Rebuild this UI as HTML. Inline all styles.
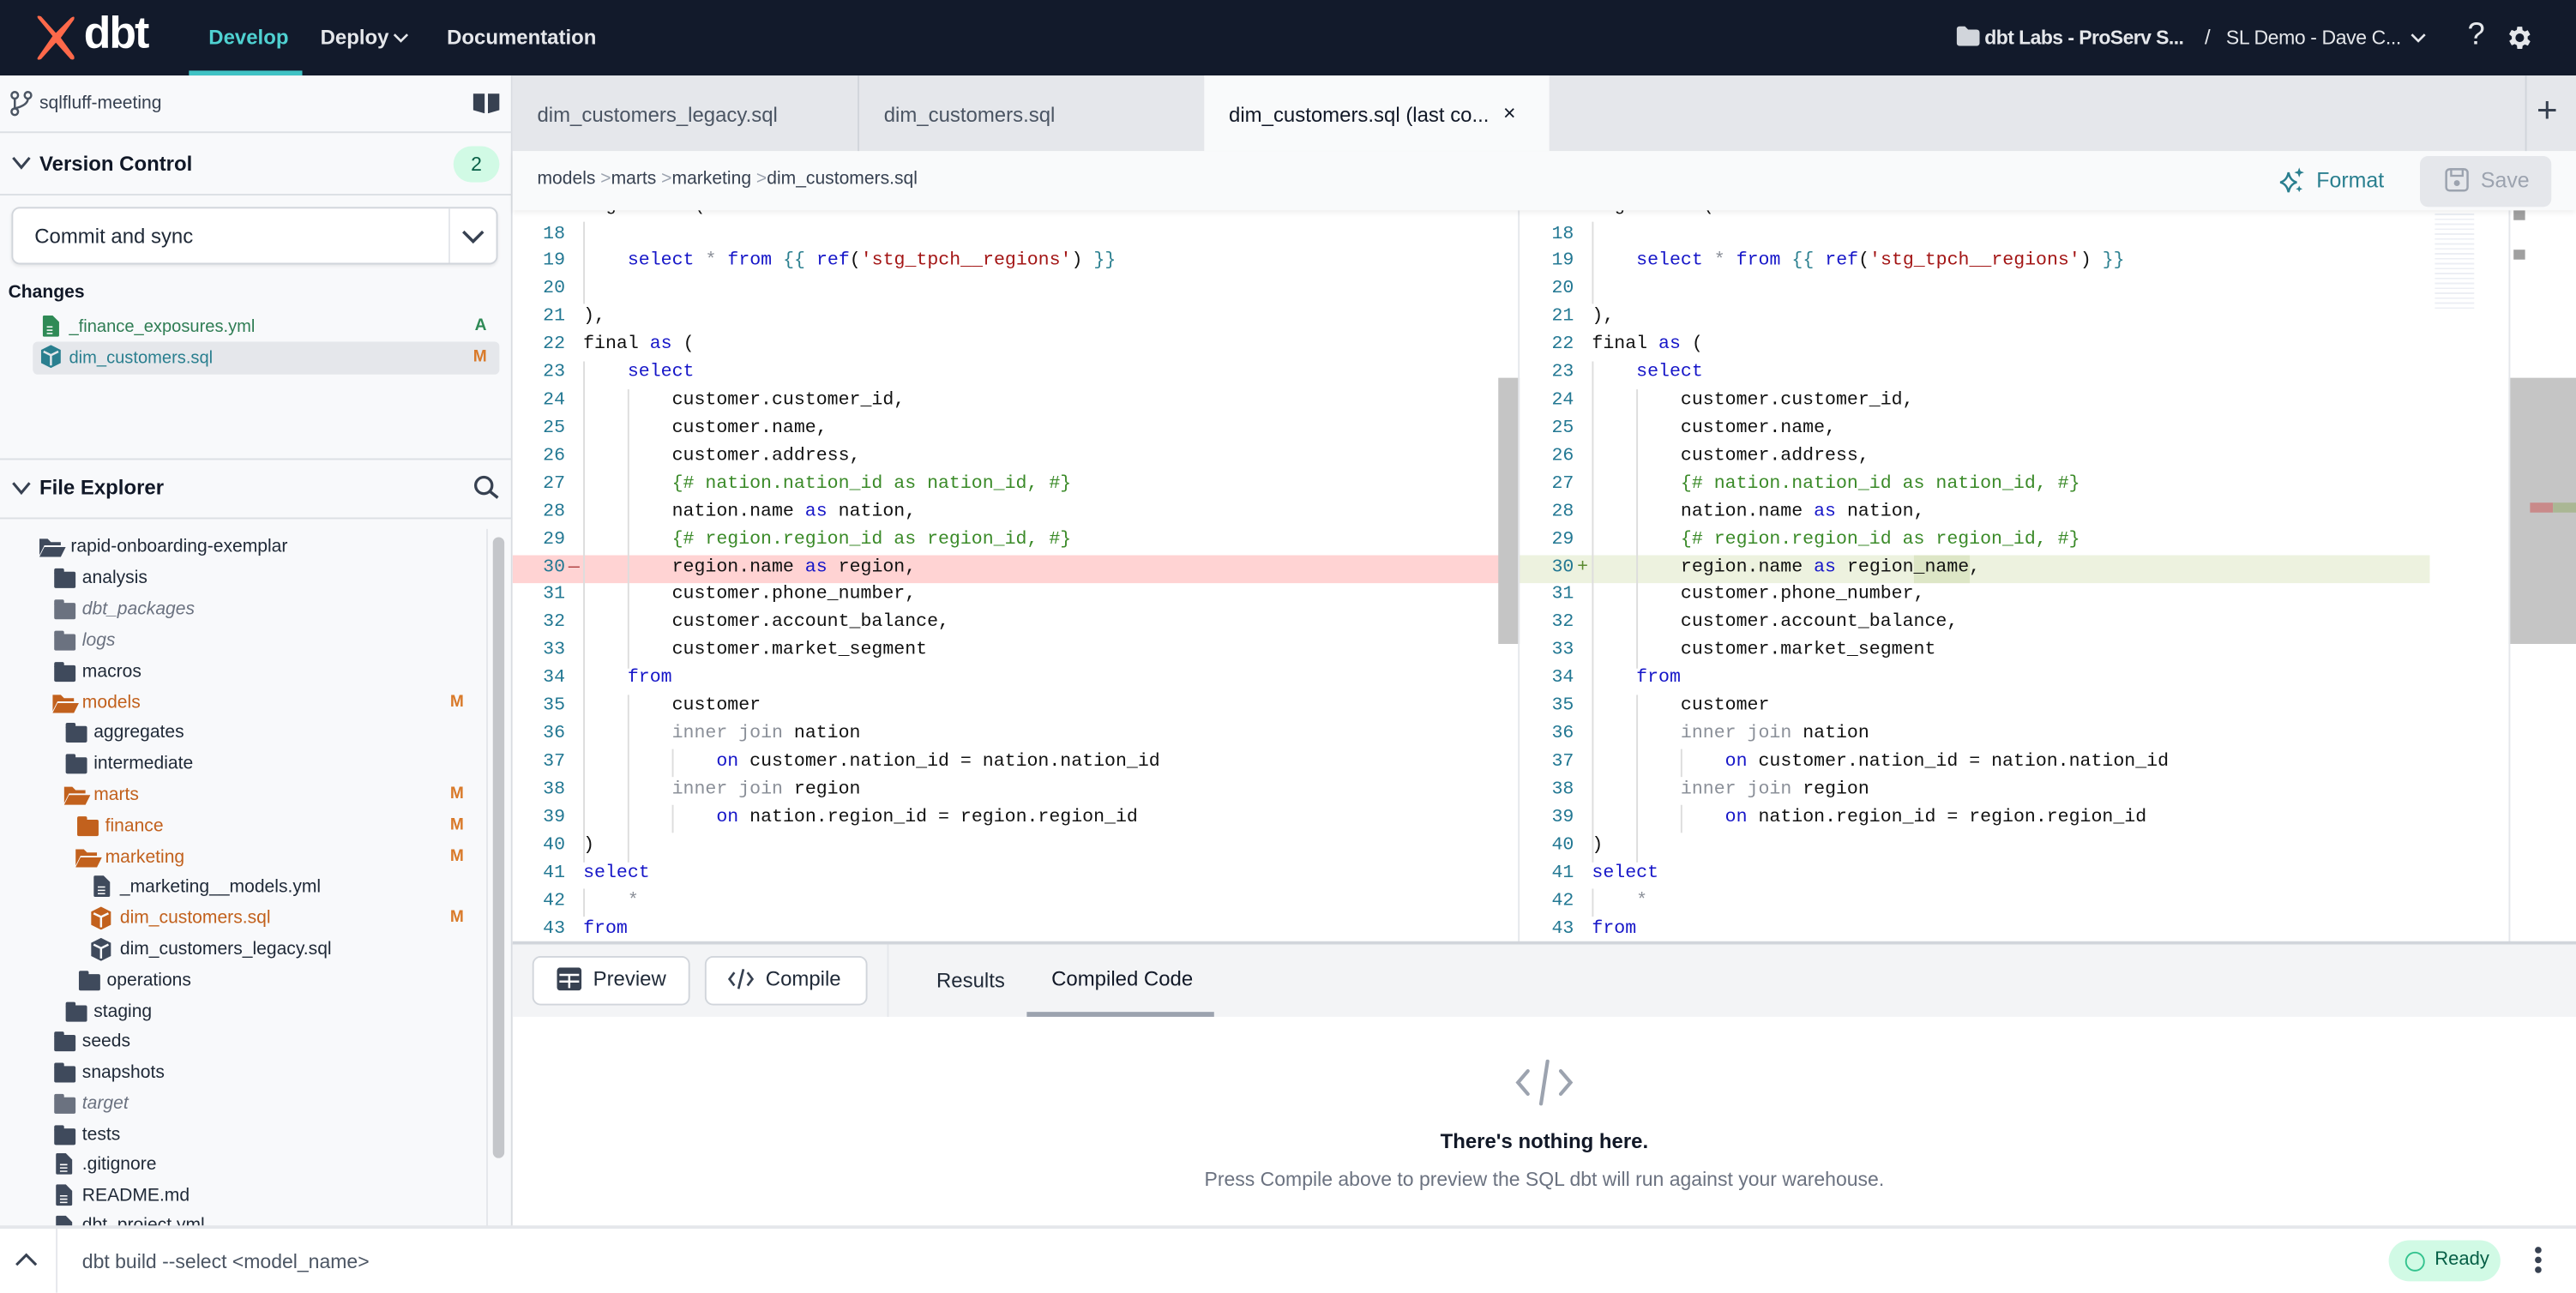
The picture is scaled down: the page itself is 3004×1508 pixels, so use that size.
<!DOCTYPE html>
<html><head><meta charset="utf-8">
<style>
*{box-sizing:border-box;margin:0;padding:0}
html,body{width:3004px;height:1508px;overflow:hidden;background:#fff}
#s{position:absolute;left:0;top:0;width:1568px;height:787px;transform:scale(1.91582);transform-origin:0 0;font-family:"Liberation Sans",sans-serif;color:#1f2937;overflow:hidden;background:#fff}
.a{position:absolute}
.t{position:absolute;white-space:nowrap}
.nav{left:0;top:0;width:1568px;height:46px;background:#121a2b}
.side{left:0;top:46px;width:312px;height:702px;background:#f8f9fb;border-right:1px solid #d9dce1}
.hr{position:absolute;left:0;width:312px;height:1px;background:#dcdfe4}
.tree .t{font-size:11px;color:#1f2937}
.fold{position:absolute;width:13px;height:10px;background:#3f4a5c;border-radius:1px}
.fold:before{content:"";position:absolute;left:0;top:-2px;width:6px;height:3px;background:inherit;border-radius:1px 1px 0 0}
.M{position:absolute;left:274px;font-size:10px;font-weight:bold;color:#d97a2a}
.code{font-family:"Liberation Mono",monospace;font-size:11.25px;color:#111}
.ln{position:absolute;width:32px;text-align:right;color:#237893}
.cl{position:absolute;white-space:pre}
.k{color:#1616c8}.j{color:#2a7f8f}.s{color:#a31515}.c{color:#3a8a28}.g{color:#8a8f98}
</style></head><body><div id="s">

<!-- NAV -->
<div class="a nav"></div>
<svg class="a" style="left:19px;top:9px" width="30" height="29" viewBox="0 0 30 29"><path d="M4 2 L13 13 L4 26 Q3 28 6 27 L15 17 L24 27 Q27 28 26 25 L18 14 L26 3 Q27 0 24 2 L15 11 L6 1 Q3 0 4 2Z" fill="#ff694a"/></svg>
<div class="t" style="left:51px;top:5px;font-size:27px;font-weight:bold;color:#fff;letter-spacing:-1px">dbt</div>
<div class="t" style="left:127px;top:16px;font-size:12.5px;font-weight:bold;color:#4fd1d1">Develop</div>
<div class="a" style="left:115px;top:43px;width:69px;height:3px;background:#3fc2c4"></div>
<div class="t" style="left:195px;top:16px;font-size:12.5px;font-weight:bold;color:#e5e7eb">Deploy</div>
<svg class="a" style="left:239px;top:19px" width="10" height="8"><path d="M1 2 L5 6 L9 2" stroke="#e5e7eb" stroke-width="1.4" fill="none"/></svg>
<div class="t" style="left:272px;top:16px;font-size:12.5px;font-weight:bold;color:#e5e7eb">Documentation</div>
<svg class="a" style="left:1191px;top:16px" width="14" height="12"><path d="M0 2 Q0 0 2 0 L5 0 L7 2 L12 2 Q14 2 14 4 L14 10 Q14 12 12 12 L2 12 Q0 12 0 10Z" fill="#d1d5db"/></svg>
<div class="t" style="left:1208px;top:16px;font-size:12px;font-weight:bold;color:#e5e7eb;letter-spacing:-0.3px">dbt Labs - ProServ S...</div>
<div class="t" style="left:1342px;top:16px;font-size:12.5px;color:#e5e7eb">/</div>
<div class="t" style="left:1355px;top:16px;font-size:12px;color:#e5e7eb;letter-spacing:-0.2px">SL Demo - Dave C...</div>
<svg class="a" style="left:1467px;top:19px" width="10" height="8"><path d="M1 2 L5 6 L9 2" stroke="#e5e7eb" stroke-width="1.4" fill="none"/></svg>
<div class="t" style="left:1502px;top:11px;font-size:19px;color:#e5e7eb">?</div>
<svg class="a" style="left:1524px;top:14px" width="18" height="18" viewBox="0 0 24 24"><path fill="#e5e7eb" d="M19.4 13a7.5 7.5 0 000-2l2.1-1.6-2-3.5-2.5 1a7.6 7.6 0 00-1.7-1L15 3h-4l-.4 2.6a7.6 7.6 0 00-1.7 1l-2.5-1-2 3.5L6.6 11a7.5 7.5 0 000 2l-2.1 1.6 2 3.5 2.5-1a7.6 7.6 0 001.7 1L11 21h4l.4-2.6a7.6 7.6 0 001.7-1l2.5 1 2-3.5zM13 15.5a3.5 3.5 0 110-7 3.5 3.5 0 010 7z"/></svg>

<!-- SIDEBAR -->
<div class="a side"></div>
<svg class="a" style="left:6px;top:55px" width="14" height="16" viewBox="0 0 14 16"><circle cx="3" cy="3" r="2" stroke="#4b5563" fill="none" stroke-width="1.3"/><circle cx="3" cy="13" r="2" stroke="#4b5563" fill="none" stroke-width="1.3"/><circle cx="11" cy="3" r="2" stroke="#4b5563" fill="none" stroke-width="1.3"/><path d="M3 5 V11 M11 5 Q11 9 3 11" stroke="#4b5563" fill="none" stroke-width="1.3"/></svg>
<div class="t" style="left:24px;top:57px;font-size:11px;color:#374151">sqlfluff-meeting</div>
<svg class="a" style="left:288px;top:56px" width="16" height="13"><path d="M0 1 L7 1 L7 13 L0 11Z M9 1 L16 1 L16 11 L9 13Z" fill="#374151"/></svg>
<div class="hr" style="top:80px"></div>
<svg class="a" style="left:7px;top:95px" width="12" height="9"><path d="M1 1 L6 7 L11 1" stroke="#374151" stroke-width="1.6" fill="none"/></svg>
<div class="t" style="left:24px;top:93px;font-size:12.5px;font-weight:bold;color:#111827">Version Control</div>
<div class="a" style="left:276px;top:89px;width:28px;height:22px;border-radius:11px;background:#d1fae5;color:#065f46;font-size:12px;text-align:center;line-height:22px">2</div>
<div class="hr" style="top:118px"></div>
<div class="a" style="left:7px;top:126px;width:296px;height:35px;background:#fff;border:1px solid #d1d5db;border-radius:5px;box-shadow:0 1px 2px rgba(0,0,0,.08)"></div>
<div class="a" style="left:273px;top:127px;width:1px;height:33px;background:#e5e7eb"></div>
<div class="t" style="left:21px;top:137px;font-size:12.5px;color:#1f2937">Commit and sync</div>
<svg class="a" style="left:281px;top:140px" width="14" height="9"><path d="M1 1 L7 7 L13 1" stroke="#374151" stroke-width="1.8" fill="none"/></svg>
<div class="t" style="left:5px;top:172px;font-size:11px;font-weight:bold;color:#111827">Changes</div>
<svg class="a" style="left:26px;top:192px" width="10" height="13"><path d="M0 1 Q0 0 1 0 L6 0 L10 4 L10 12 Q10 13 9 13 L1 13 Q0 13 0 12Z" fill="#2f8a56"/><path d="M2.5 7 H6 M2.5 9 H6 M2.5 11 H6" stroke="#fff" stroke-width=".8"/></svg>
<div class="t" style="left:42px;top:193px;font-size:10.5px;color:#2f7d54">_finance_exposures.yml</div>
<div class="t" style="left:289px;top:193px;font-size:10px;font-weight:bold;color:#2f8a56">A</div>
<div class="a" style="left:20px;top:208px;width:284px;height:20px;background:#e5e7eb;border-radius:3px"></div>
<svg class="a" style="left:25px;top:210px" width="12" height="14" viewBox="0 0 12 14"><path d="M6 0 L12 3 L12 11 L6 14 L0 11 L0 3Z" fill="#2a7f8f"/><path d="M1.5 4 L6 6.2 L10.5 4 M6 6.2 V12.5" stroke="#e5e7eb" stroke-width="1.3" fill="none"/></svg>
<div class="t" style="left:42px;top:212px;font-size:10.5px;color:#2a7f8f">dim_customers.sql</div>
<div class="t" style="left:288px;top:212px;font-size:10px;font-weight:bold;color:#d97a2a">M</div>
<div class="hr" style="top:279px"></div>
<svg class="a" style="left:7px;top:293px" width="12" height="9"><path d="M1 1 L6 7 L11 1" stroke="#374151" stroke-width="1.6" fill="none"/></svg>
<div class="t" style="left:24px;top:290px;font-size:12.5px;font-weight:bold;color:#111827">File Explorer</div>
<svg class="a" style="left:288px;top:289px" width="16" height="15"><circle cx="6.5" cy="6.5" r="5" stroke="#374151" stroke-width="1.7" fill="none"/><path d="M10 10 L15 14" stroke="#374151" stroke-width="1.8"/></svg>
<div class="hr" style="top:315px"></div>
<div class="a" style="left:300px;top:327px;width:7px;height:378px;border-radius:4px;background:#c4c6ca"></div>
<div class="a" style="left:296px;top:322px;width:1px;height:426px;background:#e5e7eb"></div>

<div class="tree">
<svg class="a" style="left:24px;top:327px" width="16" height="12"><path d="M0 1 H5 L7 3 H13 V5 H3 L0 11Z M3 6 H16 L13 12 H0Z" fill="#3f4a5c"/></svg>
<div class="t" style="left:43px;top:327px">rapid-onboarding-exemplar</div>
<div class="fold" style="left:33px;top:348px"></div><div class="t" style="left:50px;top:346px">analysis</div>
<div class="fold" style="left:33px;top:367px;background:#6b7280"></div><div class="t" style="left:50px;top:365px;font-style:italic;color:#6b7280">dbt_packages</div>
<div class="fold" style="left:33px;top:386px;background:#6b7280"></div><div class="t" style="left:50px;top:384px;font-style:italic;color:#6b7280">logs</div>
<div class="fold" style="left:33px;top:405px"></div><div class="t" style="left:50px;top:403px">macros</div>
<svg class="a" style="left:32px;top:422px" width="16" height="12"><path d="M0 1 H5 L7 3 H13 V5 H3 L0 11Z M3 6 H16 L13 12 H0Z" fill="#c2611d"/></svg>
<div class="t" style="left:50px;top:422px;color:#c2611d">models</div><div class="M" style="top:422px">M</div>
<div class="fold" style="left:40px;top:442px"></div><div class="t" style="left:57px;top:440px">aggregates</div>
<div class="fold" style="left:40px;top:461px"></div><div class="t" style="left:57px;top:459px">intermediate</div>
<svg class="a" style="left:39px;top:478px" width="16" height="12"><path d="M0 1 H5 L7 3 H13 V5 H3 L0 11Z M3 6 H16 L13 12 H0Z" fill="#c2611d"/></svg>
<div class="t" style="left:57px;top:478px;color:#c2611d">marts</div><div class="M" style="top:478px">M</div>
<div class="fold" style="left:47px;top:499px;background:#c2611d"></div><div class="t" style="left:64px;top:497px;color:#c2611d">finance</div><div class="M" style="top:497px">M</div>
<svg class="a" style="left:46px;top:516px" width="16" height="12"><path d="M0 1 H5 L7 3 H13 V5 H3 L0 11Z M3 6 H16 L13 12 H0Z" fill="#c2611d"/></svg>
<div class="t" style="left:64px;top:516px;color:#c2611d">marketing</div><div class="M" style="top:516px">M</div>
<svg class="a" style="left:57px;top:533px" width="10" height="13"><path d="M0 1 Q0 0 1 0 L6 0 L10 4 L10 12 Q10 13 9 13 L1 13 Q0 13 0 12Z" fill="#3f4a5c"/><path d="M2.5 7 H7 M2.5 9 H7 M2.5 11 H7" stroke="#fff" stroke-width=".8"/></svg>
<div class="t" style="left:73px;top:534px">_marketing__models.yml</div>
<svg class="a" style="left:55px;top:552px" width="13" height="14" viewBox="0 0 12 14"><path d="M6 0 L12 3 L12 11 L6 14 L0 11 L0 3Z" fill="#c2611d"/><path d="M1.5 4 L6 6.2 L10.5 4 M6 6.2 V12.5" stroke="#f8f9fb" stroke-width="1.3" fill="none"/></svg>
<div class="t" style="left:73px;top:553px;color:#c2611d">dim_customers.sql</div><div class="M" style="top:553px">M</div>
<svg class="a" style="left:55px;top:571px" width="13" height="14" viewBox="0 0 12 14"><path d="M6 0 L12 3 L12 11 L6 14 L0 11 L0 3Z" fill="#3f4a5c"/><path d="M1.5 4 L6 6.2 L10.5 4 M6 6.2 V12.5" stroke="#f8f9fb" stroke-width="1.3" fill="none"/></svg>
<div class="t" style="left:73px;top:572px">dim_customers_legacy.sql</div>
<div class="fold" style="left:48px;top:593px"></div><div class="t" style="left:65px;top:591px">operations</div>
<div class="fold" style="left:40px;top:612px"></div><div class="t" style="left:57px;top:610px">staging</div>
<div class="fold" style="left:33px;top:630px"></div><div class="t" style="left:50px;top:628px">seeds</div>
<div class="fold" style="left:33px;top:649px"></div><div class="t" style="left:50px;top:647px">snapshots</div>
<div class="fold" style="left:33px;top:668px;background:#6b7280"></div><div class="t" style="left:50px;top:666px;font-style:italic;color:#6b7280">target</div>
<div class="fold" style="left:33px;top:687px"></div><div class="t" style="left:50px;top:685px">tests</div>
<svg class="a" style="left:34px;top:702px" width="10" height="13"><path d="M0 1 Q0 0 1 0 L6 0 L10 4 L10 12 Q10 13 9 13 L1 13 Q0 13 0 12Z" fill="#3f4a5c"/><path d="M2.5 7 H7 M2.5 9 H7 M2.5 11 H7" stroke="#fff" stroke-width=".8"/></svg>
<div class="t" style="left:50px;top:703px">.gitignore</div>
<svg class="a" style="left:34px;top:721px" width="10" height="13"><path d="M0 1 Q0 0 1 0 L6 0 L10 4 L10 12 Q10 13 9 13 L1 13 Q0 13 0 12Z" fill="#3f4a5c"/><path d="M2.5 7 H7 M2.5 9 H7 M2.5 11 H7" stroke="#fff" stroke-width=".8"/></svg>
<div class="t" style="left:50px;top:722px">README.md</div>
<div class="a" style="left:0;top:738px;width:296px;height:10px;overflow:hidden"><svg class="a" style="left:34px;top:2px" width="10" height="13"><path d="M0 1 Q0 0 1 0 L6 0 L10 4 L10 12 Q10 13 9 13 L1 13 Q0 13 0 12Z" fill="#3f4a5c"/></svg><div class="t" style="left:50px;top:2px;font-size:11px">dbt_project.yml</div></div>
</div>

<!-- TABS -->
<div class="a" style="left:312px;top:46px;width:1256px;height:46px;background:#e5e7eb"></div>
<div class="a" style="left:522px;top:46px;width:1px;height:46px;background:#d1d5db"></div>
<div class="a" style="left:733px;top:46px;width:210px;height:46px;background:#f9fafb"></div>
<div class="a" style="left:1537px;top:46px;width:1px;height:46px;background:#d1d5db"></div>
<div class="t" style="left:327px;top:63px;font-size:12.5px;color:#4b5563">dim_customers_legacy.sql</div>
<div class="t" style="left:538px;top:63px;font-size:12.5px;color:#4b5563">dim_customers.sql</div>
<div class="t" style="left:748px;top:63px;font-size:12.5px;color:#111827">dim_customers.sql (last co...</div>
<div class="t" style="left:915px;top:61px;font-size:13px;color:#111827">×</div>
<div class="t" style="left:1544px;top:54px;font-size:22px;color:#374151">+</div>
<!-- breadcrumb -->
<div class="a" style="left:312px;top:92px;width:1256px;height:36px;background:#f9fafb;box-shadow:0 2px 3px rgba(0,0,0,.06);z-index:2"></div>
<div class="t" style="left:327px;top:103px;font-size:11px;color:#374151;z-index:3">models <span style="color:#9ca3af">&gt;</span>marts <span style="color:#9ca3af">&gt;</span>marketing <span style="color:#9ca3af">&gt;</span>dim_customers.sql</div>
<svg class="a" style="left:1387px;top:102px;z-index:3" width="16" height="16" viewBox="0 0 16 16"><path d="M6 3 Q7 8 11 9 Q7 10 6 15 Q5 10 1 9 Q5 8 6 3Z" stroke="#2a7f8f" stroke-width="1.3" fill="none"/><path d="M12.5 0 L13.3 2.2 L15.5 3 L13.3 3.8 L12.5 6 L11.7 3.8 L9.5 3 L11.7 2.2Z M12.5 11 L13.1 12.4 L14.5 13 L13.1 13.6 L12.5 15 L11.9 13.6 L10.5 13 L11.9 12.4Z" fill="#2a7f8f"/></svg>
<div class="t" style="left:1410px;top:102px;font-size:13px;color:#2a7f8f;z-index:3">Format</div>
<div class="a" style="left:1473px;top:95px;width:80px;height:31px;background:#e5e7eb;border-radius:5px;z-index:3"></div>
<svg class="a" style="left:1488px;top:102px;z-index:4" width="15" height="15"><rect x="1" y="1" width="13" height="13" rx="2" stroke="#9ca3af" stroke-width="1.3" fill="none"/><rect x="4" y="1" width="7" height="4" stroke="#9ca3af" stroke-width="1.2" fill="none"/><circle cx="7.5" cy="9.5" r="1.8" fill="#9ca3af"/></svg>
<div class="t" style="left:1510px;top:102px;font-size:13px;color:#9ca3af;z-index:4">Save</div>

<!-- CODE AREA -->
<div class="a" style="left:312px;top:128px;width:1256px;height:446px;background:#fff;overflow:hidden">
 <div class="a" style="left:0;top:210px;width:613px;height:17px;background:#ffd3d3"></div>
 <div class="a" style="left:613px;top:210px;width:554px;height:17px;background:#edf2df"></div>
 <div class="a" style="left:600px;top:102px;width:13px;height:162px;background:#c5c5c5"></div>
 <div class="a" style="left:612px;top:0;width:1px;height:446px;background:#e5e7eb"></div>
 <div class="a" style="left:1170px;top:0;width:40px;height:60px;opacity:.35;background:repeating-linear-gradient(#fff 0 2px,#c8d0e0 2px 3px);clip-path:polygon(0 0,60% 0,60% 100%,0 100%)"></div>
 <div class="a" style="left:1218px;top:0;width:7px;height:6px;background:#a0a0a0"></div>
 <div class="a" style="left:1218px;top:24px;width:7px;height:6px;background:#a0a0a0"></div>
 <div class="a" style="left:1215px;top:102px;width:41px;height:162px;background:#c5c5c5"></div>
 <div class="a" style="left:1215px;top:0;width:1px;height:446px;background:#e5e7eb"></div>
 <div class="a" style="left:1228px;top:178px;width:14px;height:6px;background:#c98a8a"></div>
 <div class="a" style="left:1242px;top:178px;width:14px;height:6px;background:#aab794"></div>

 <!-- LEFT PANE -->
 <div class="a code" style="left:0;top:-10.4px;width:600px;height:460px">
  <div class="a" style="left:43px;top:17px;width:1px;height:50px;background:#ddd"></div>
  <div class="a" style="left:43px;top:102px;width:1px;height:305px;background:#ddd"></div>
  <div class="a" style="left:70px;top:119px;width:1px;height:170px;background:#ddd"></div>
  <div class="a" style="left:70px;top:305px;width:1px;height:102px;background:#ddd"></div>
  <div class="a" style="left:97px;top:338px;width:1px;height:17px;background:#ddd"></div>
  <div class="a" style="left:97px;top:372px;width:1px;height:17px;background:#ddd"></div>
  <div class="a" style="left:43px;top:423px;width:1px;height:17px;background:#ddd"></div>
 </div>
 <div class="a code" style="left:0;top:-10.4px;width:600px;height:460px;line-height:16.92px">
  <div class="ln" style="top:0">17</div><div class="cl" style="left:43px;top:0">region <span class="k">as</span> (</div>
  <div class="ln" style="top:16.92px">18</div>
  <div class="ln" style="top:33.84px">19</div><div class="cl" style="left:43px;top:33.84px">    <span class="k">select</span> <span class="g">*</span> <span class="k">from</span> <span class="j">{{</span> <span class="k">ref</span>(<span class="s">'stg_tpch__regions'</span>) <span class="j">}}</span></div>
  <div class="ln" style="top:50.76px">20</div>
  <div class="ln" style="top:67.68px">21</div><div class="cl" style="left:43px;top:67.68px">),</div>
  <div class="ln" style="top:84.6px">22</div><div class="cl" style="left:43px;top:84.6px">final <span class="k">as</span> (</div>
  <div class="ln" style="top:101.52px">23</div><div class="cl" style="left:43px;top:101.52px">    <span class="k">select</span></div>
  <div class="ln" style="top:118.44px">24</div><div class="cl" style="left:43px;top:118.44px">        customer.customer_id,</div>
  <div class="ln" style="top:135.36px">25</div><div class="cl" style="left:43px;top:135.36px">        customer.name,</div>
  <div class="ln" style="top:152.28px">26</div><div class="cl" style="left:43px;top:152.28px">        customer.address,</div>
  <div class="ln" style="top:169.2px">27</div><div class="cl c" style="left:43px;top:169.2px">        {# nation.nation_id as nation_id, #}</div>
  <div class="ln" style="top:186.12px">28</div><div class="cl" style="left:43px;top:186.12px">        nation.name <span class="k">as</span> nation,</div>
  <div class="ln" style="top:203.04px">29</div><div class="cl c" style="left:43px;top:203.04px">        {# region.region_id as region_id, #}</div>
  <div class="ln" style="top:219.96px">30</div><div class="cl" style="left:34px;top:219.96px;color:#b04040">—</div><div class="cl" style="left:43px;top:219.96px">        region.name <span class="k">as</span> region,</div>
  <div class="ln" style="top:236.88px">31</div><div class="cl" style="left:43px;top:236.88px">        customer.phone_number,</div>
  <div class="ln" style="top:253.8px">32</div><div class="cl" style="left:43px;top:253.8px">        customer.account_balance,</div>
  <div class="ln" style="top:270.72px">33</div><div class="cl" style="left:43px;top:270.72px">        customer.market_segment</div>
  <div class="ln" style="top:287.64px">34</div><div class="cl" style="left:43px;top:287.64px">    <span class="k">from</span></div>
  <div class="ln" style="top:304.56px">35</div><div class="cl" style="left:43px;top:304.56px">        customer</div>
  <div class="ln" style="top:321.48px">36</div><div class="cl" style="left:43px;top:321.48px">        <span class="g">inner join</span> nation</div>
  <div class="ln" style="top:338.4px">37</div><div class="cl" style="left:43px;top:338.4px">            <span class="k">on</span> customer.nation_id = nation.nation_id</div>
  <div class="ln" style="top:355.32px">38</div><div class="cl" style="left:43px;top:355.32px">        <span class="g">inner join</span> region</div>
  <div class="ln" style="top:372.24px">39</div><div class="cl" style="left:43px;top:372.24px">            <span class="k">on</span> nation.region_id = region.region_id</div>
  <div class="ln" style="top:389.16px">40</div><div class="cl" style="left:43px;top:389.16px">)</div>
  <div class="ln" style="top:406.08px">41</div><div class="cl" style="left:43px;top:406.08px"><span class="k">select</span></div>
  <div class="ln" style="top:423px">42</div><div class="cl g" style="left:43px;top:423px">    *</div>
  <div class="ln" style="top:439.92px">43</div><div class="cl" style="left:43px;top:439.92px"><span class="k">from</span></div>
 </div>

 <!-- RIGHT PANE -->
 <div class="a code" style="left:614px;top:-10.4px;width:600px;height:460px">
  <div class="a" style="left:43px;top:17px;width:1px;height:50px;background:#ddd"></div>
  <div class="a" style="left:43px;top:102px;width:1px;height:305px;background:#ddd"></div>
  <div class="a" style="left:70px;top:119px;width:1px;height:170px;background:#ddd"></div>
  <div class="a" style="left:70px;top:305px;width:1px;height:102px;background:#ddd"></div>
  <div class="a" style="left:97px;top:338px;width:1px;height:17px;background:#ddd"></div>
  <div class="a" style="left:97px;top:372px;width:1px;height:17px;background:#ddd"></div>
  <div class="a" style="left:43px;top:423px;width:1px;height:17px;background:#ddd"></div>
  <div class="a" style="left:239px;top:220.4px;width:34px;height:17px;background:#dde6c6"></div>
 </div>
 <div class="a code" style="left:614px;top:-10.4px;width:600px;height:460px;line-height:16.92px">
  <div class="ln" style="top:0">17</div><div class="cl" style="left:43px;top:0">region <span class="k">as</span> (</div>
  <div class="ln" style="top:16.92px">18</div>
  <div class="ln" style="top:33.84px">19</div><div class="cl" style="left:43px;top:33.84px">    <span class="k">select</span> <span class="g">*</span> <span class="k">from</span> <span class="j">{{</span> <span class="k">ref</span>(<span class="s">'stg_tpch__regions'</span>) <span class="j">}}</span></div>
  <div class="ln" style="top:50.76px">20</div>
  <div class="ln" style="top:67.68px">21</div><div class="cl" style="left:43px;top:67.68px">),</div>
  <div class="ln" style="top:84.6px">22</div><div class="cl" style="left:43px;top:84.6px">final <span class="k">as</span> (</div>
  <div class="ln" style="top:101.52px">23</div><div class="cl" style="left:43px;top:101.52px">    <span class="k">select</span></div>
  <div class="ln" style="top:118.44px">24</div><div class="cl" style="left:43px;top:118.44px">        customer.customer_id,</div>
  <div class="ln" style="top:135.36px">25</div><div class="cl" style="left:43px;top:135.36px">        customer.name,</div>
  <div class="ln" style="top:152.28px">26</div><div class="cl" style="left:43px;top:152.28px">        customer.address,</div>
  <div class="ln" style="top:169.2px">27</div><div class="cl c" style="left:43px;top:169.2px">        {# nation.nation_id as nation_id, #}</div>
  <div class="ln" style="top:186.12px">28</div><div class="cl" style="left:43px;top:186.12px">        nation.name <span class="k">as</span> nation,</div>
  <div class="ln" style="top:203.04px">29</div><div class="cl c" style="left:43px;top:203.04px">        {# region.region_id as region_id, #}</div>
  <div class="ln" style="top:219.96px">30</div><div class="cl" style="left:34px;top:219.96px;color:#5a8a30">+</div><div class="cl" style="left:43px;top:219.96px">        region.name <span class="k">as</span> region_name,</div>
  <div class="ln" style="top:236.88px">31</div><div class="cl" style="left:43px;top:236.88px">        customer.phone_number,</div>
  <div class="ln" style="top:253.8px">32</div><div class="cl" style="left:43px;top:253.8px">        customer.account_balance,</div>
  <div class="ln" style="top:270.72px">33</div><div class="cl" style="left:43px;top:270.72px">        customer.market_segment</div>
  <div class="ln" style="top:287.64px">34</div><div class="cl" style="left:43px;top:287.64px">    <span class="k">from</span></div>
  <div class="ln" style="top:304.56px">35</div><div class="cl" style="left:43px;top:304.56px">        customer</div>
  <div class="ln" style="top:321.48px">36</div><div class="cl" style="left:43px;top:321.48px">        <span class="g">inner join</span> nation</div>
  <div class="ln" style="top:338.4px">37</div><div class="cl" style="left:43px;top:338.4px">            <span class="k">on</span> customer.nation_id = nation.nation_id</div>
  <div class="ln" style="top:355.32px">38</div><div class="cl" style="left:43px;top:355.32px">        <span class="g">inner join</span> region</div>
  <div class="ln" style="top:372.24px">39</div><div class="cl" style="left:43px;top:372.24px">            <span class="k">on</span> nation.region_id = region.region_id</div>
  <div class="ln" style="top:389.16px">40</div><div class="cl" style="left:43px;top:389.16px">)</div>
  <div class="ln" style="top:406.08px">41</div><div class="cl" style="left:43px;top:406.08px"><span class="k">select</span></div>
  <div class="ln" style="top:423px">42</div><div class="cl g" style="left:43px;top:423px">    *</div>
  <div class="ln" style="top:439.92px">43</div><div class="cl" style="left:43px;top:439.92px"><span class="k">from</span></div>
 </div>
</div>

<!-- BOTTOM PANEL -->
<div class="a" style="left:312px;top:573px;width:1256px;height:2px;background:#d1d5db"></div>
<div class="a" style="left:312px;top:575px;width:1256px;height:44px;background:#f3f4f6"></div>
<div class="a" style="left:324px;top:582px;width:96px;height:30px;background:#fff;border:1px solid #d1d5db;border-radius:5px"></div>
<svg class="a" style="left:339px;top:589px" width="15" height="14"><rect x="0" y="0" width="15" height="14" rx="2" fill="#374151"/><path d="M1.5 4.5 H13.5 M7.5 4.5 V12.5 M1.5 8.5 H13.5" stroke="#fff" stroke-width="1.3"/></svg>
<div class="t" style="left:361px;top:589px;font-size:12.5px;color:#1f2937">Preview</div>
<div class="a" style="left:429px;top:582px;width:99px;height:30px;background:#fff;border:1px solid #d1d5db;border-radius:5px"></div>
<svg class="a" style="left:443px;top:589px" width="16" height="14"><path d="M4 3 L1 7 L4 11 M12 3 L15 7 L12 11 M9.5 1 L6.5 13" stroke="#374151" stroke-width="1.4" fill="none"/></svg>
<div class="t" style="left:466px;top:589px;font-size:12.5px;color:#1f2937">Compile</div>
<div class="a" style="left:540px;top:575px;width:1px;height:44px;background:#e5e7eb"></div>
<div class="t" style="left:570px;top:590px;font-size:12.5px;color:#1f2937">Results</div>
<div class="t" style="left:640px;top:589px;font-size:12.5px;color:#111827">Compiled Code</div>
<div class="a" style="left:625px;top:616px;width:114px;height:3px;background:#9ca3af"></div>
<svg class="a" style="left:922px;top:645px" width="36" height="28"><path d="M8 7 L2 14 L8 21 M28 7 L34 14 L28 21 M20 1 L16 27" stroke="#9ca3af" stroke-width="2.2" fill="none" stroke-linecap="round"/></svg>
<div class="t" style="left:0;width:1880px;text-align:center;top:688px;font-size:12.5px;font-weight:bold;color:#111827">There's nothing here.</div>
<div class="t" style="left:0;width:1880px;text-align:center;top:711px;font-size:12px;color:#6b7280">Press Compile above to preview the SQL dbt will run against your warehouse.</div>

<!-- STATUS BAR -->
<div class="a" style="left:0;top:746px;width:1568px;height:2px;background:#e5e7eb"></div>
<div class="a" style="left:0;top:748px;width:1568px;height:39px;background:#fff"></div>
<svg class="a" style="left:9px;top:762px" width="14" height="9"><path d="M1 8 L7 2 L13 8" stroke="#374151" stroke-width="1.6" fill="none"/></svg>
<div class="a" style="left:34px;top:748px;width:1px;height:39px;background:#e5e7eb"></div>
<div class="t" style="left:50px;top:761px;font-size:12px;color:#4b5563">dbt build --select &lt;model_name&gt;</div>
<div class="a" style="left:1454px;top:755px;width:68px;height:25px;border-radius:13px;background:#d1fae5"></div>
<div class="a" style="left:1464px;top:762px;width:12px;height:12px;border-radius:50%;border:1.3px solid #34c38f"></div>
<div class="t" style="left:1482px;top:761px;font-size:11.5px;color:#065f46">Ready</div>
<div class="a" style="left:1543px;top:759px;width:4px;height:4px;border-radius:50%;background:#374151"></div>
<div class="a" style="left:1543px;top:765px;width:4px;height:4px;border-radius:50%;background:#374151"></div>
<div class="a" style="left:1543px;top:771px;width:4px;height:4px;border-radius:50%;background:#374151"></div>

</div></body></html>
